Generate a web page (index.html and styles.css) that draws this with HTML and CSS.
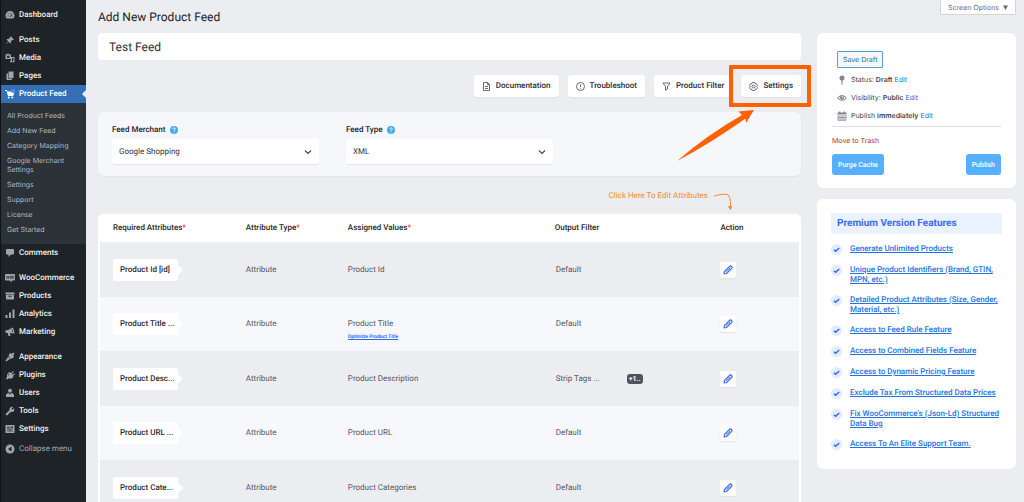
FILE: index.html
```html
<!DOCTYPE html>
<html lang="en">
<head>
	<meta charset="UTF-8">
	<meta name="viewport" content="width=device-width, initial-scale=1">
	<title>Add New Product Feed</title>
	<link rel="stylesheet" href="styles.css">
</head>
<body>
	<!-- shared icons -->
	<svg class="sprite">
		<symbol id="pencil" viewBox="0 0 20 20">
			<path d="M2 18l1-5L13 3q2-2 4 0t0 4L7 17z" fill="none" stroke="currentColor" stroke-width="2.4" stroke-linejoin="round"/>
			<path d="M7 13l5-5M11 5l4 4" fill="none" stroke="currentColor" stroke-width="1.600" stroke-linecap="round"/>
		</symbol>
		<symbol id="tick" viewBox="0 0 22 22">
			<circle cx="11" cy="11" r="11" fill="#e3ecfe"/>
			<path d="M6 11.500l3.200 3L16.500 8" fill="none" stroke="#2f66ee" stroke-width="2.800"/>
		</symbol>
		<symbol id="help" viewBox="0 0 16 16">
			<circle cx="8" cy="8" r="8" fill="#45a9fb"/>
			<path d="M5.500 6.300q.1-2.600 2.600-2.600t2.500 2.200q0 1.300-1.300 2T8 9.800" fill="none" stroke="#fff" stroke-width="1.600"/>
			<circle cx="8" cy="12" r="1.100" fill="#fff"/>
		</symbol>
		<symbol id="chevron" viewBox="0 0 16 16">
			<path d="M2 5l6 6 6-6" fill="none" stroke="currentColor" stroke-width="2.200"/>
		</symbol>
	</svg>

	<div class="shell">
		<nav class="sidebar">
			<ul class="menu">
				<li><a href="#"><svg class="icon" viewBox="0 0 20 20"><path d="M3.500 17A9 9 0 1 1 16.500 17z"/><path d="M5 12h2M6 7l1.500 1.500M10 5v2M15 12h-2M14.500 7L10 14" stroke="#1d2327" stroke-width="1.600"/></svg>Dashboard</a></li>
				<li class="sep"><a href="#"><svg class="icon" viewBox="0 0 20 20"><path d="M11 2l7 7-2 1-1-.5-3 3q.5 3-1.500 4.500L7 13.500 2 18l-.5-.5L6.500 12.500 3 9q2-2 5-1.500l3-3-.5-1z"/></svg>Posts</a></li>
				<li><a href="#"><svg class="icon" viewBox="0 0 20 20"><path d="M1 3h2l1-1.500h4L9 3h3v9H1z"/><circle cx="6.500" cy="7.500" r="2.600" fill="#1d2327"/><path d="M12 8h7v9a2 2 0 1 1-1.800-2v-4.500H14V17a2 2 0 1 1-2-2z"/></svg>Media</a></li>
				<li><a href="#"><svg class="icon" viewBox="0 0 20 20"><path d="M7 1h10v13H7z"/><path d="M3 5h3v10h8v3H3z"/></svg>Pages</a></li>
				<li class="active">
					<a href="#"><svg class="icon" viewBox="0 0 20 20"><path d="M0 2h4l1 3h14l-2.500 9H6L3 4H0z"/><circle cx="7.500" cy="17.200" r="2"/><circle cx="14.500" cy="17.200" r="2"/><circle cx="16" cy="4" r="4" fill="#5686f5"/></svg>Product Feed</a>
					<ul class="submenu">
						<li><a href="#">All Product Feeds</a></li>
						<li><a href="#">Add New Feed</a></li>
						<li><a href="#">Category Mapping</a></li>
						<li><a href="#">Google Merchant Settings</a></li>
						<li><a href="#">Settings</a></li>
						<li><a href="#">Support</a></li>
						<li><a href="#">License</a></li>
						<li><a href="#">Get Started</a></li>
					</ul>
				</li>
				<li><a href="#"><svg class="icon" viewBox="0 0 20 20"><path d="M4 2h12q2 0 2 2v7q0 2-2 2h-4l-5 5v-5H4q-2 0-2-2V4q0-2 2-2z"/></svg>Comments</a></li>
				<li class="sep"><a href="#"><svg class="icon" viewBox="0 0 20 20"><path d="M2 2h16q2 0 2 2v9q0 2-2 2h-5l1 4-5-4H2q-2 0-2-2V4q0-2 2-2z"/><path d="M3 6l1 5 2-4 1 4 1-5M10 6.500h3v4h-3zM14.500 6.500h3v4h-3z" fill="none" stroke="#1d2327" stroke-width="1.200"/></svg>WooCommerce</a></li>
				<li><a href="#"><svg class="icon" viewBox="0 0 20 20"><path d="M1 3h18v4H1zM2 8h16v9H2z"/><path d="M7 10.500h6" stroke="#1d2327" stroke-width="2"/></svg>Products</a></li>
				<li><a href="#"><svg class="icon" viewBox="0 0 20 20"><path d="M1 12h4v6H1zM8 7h4v11H8zM15 1h4v17h-4z"/></svg>Analytics</a></li>
				<li><a href="#"><svg class="icon" viewBox="0 0 20 20"><path d="M1 7l5-1 9-5q4 4 4 12l-9-1 1 6H7l-1.500-6L2 12q-2-2-1-5z"/><path d="M13 5q3 1 3 5" fill="none" stroke="#1d2327" stroke-width="1.600"/></svg>Marketing</a></li>
				<li class="sep"><a href="#"><svg class="icon" viewBox="0 0 20 20"><path d="M9 3l3-1 1 2 4-3 2 2-3 4 2 1-1 3-5 3-5-6zM6 9l5 5-3 1-5 4-2-2 4-5z"/></svg>Appearance</a></li>
				<li><a href="#"><svg class="icon" viewBox="0 0 20 20"><path d="M12 6l4-4 1.500 1.500-4 4 2 2 3-3L20 8l-4 4 1 1-3 4H7l-3 2-2-2 2-3V9l4-5z"/><path d="M5 6l3 2-2 4" stroke="#1d2327" fill="none"/></svg>Plugins</a></li>
				<li><a href="#"><svg class="icon" viewBox="0 0 20 20"><circle cx="10" cy="5.500" r="4"/><path d="M2 18v-4q1-4 5-4l3 3 3-3q4 0 5 4v4z"/></svg>Users</a></li>
				<li><a href="#"><svg class="icon" viewBox="0 0 20 20"><path d="M16.500 2L13 5.500l1.500 2L18 4.500q2 5-2 7-2 1-4 0L5 18q-2 1.500-3 0t0-3l7-6.500Q8 5 10.500 3t6-1z"/></svg>Tools</a></li>
				<li><a href="#"><svg class="icon" viewBox="0 0 20 20"><path d="M1 2h18v16H1z"/><path d="M6 4v12M10 4v12M14 4v12M4 8h4M8 12h4M12 7h4" stroke="#1d2327" stroke-width="1.300"/></svg>Settings</a></li>
				<li><button class="collapse" type="button"><svg class="icon" viewBox="0 0 20 20"><circle cx="10" cy="10" r="9"/><path d="M13 5v10l-7-5z" fill="#1d2327"/></svg>Collapse menu</button></li>
			</ul>
		</nav>

		<main class="content">
			<h1>Add New Product Feed</h1>
			<input class="feed-title" type="text" value="Test Feed" aria-label="Feed title">

			<div class="toolbar">
				<button type="button"><svg class="tool-icon" viewBox="0 0 18 18"><path d="M3 1h8l4 4v12H3zM11 1v4h4M6 9h6M6 13h6" /></svg>Documentation</button>
				<button type="button"><svg class="tool-icon" viewBox="0 0 18 18"><circle cx="9" cy="9" r="8"/><path d="M9 4.500v6M9 12v1.500"/></svg>Troubleshoot</button>
				<button type="button"><svg class="tool-icon" viewBox="0 0 18 18"><path d="M2 2h14l-5 7v5l-4 2.500V9z"/></svg>Product Filter</button>
				<div class="callout">
					<button type="button"><svg class="tool-icon" viewBox="0 0 18 18"><path d="M7 1h4l1.200 2.300 2.600.2 2 3.700L15.500 9l1.300 2-2 3.600-2.600.2L11 17H7l-1.200-2.200-2.600-.2-2-3.600L2.500 9 1.200 7.200l2-3.700 2.600-.2z"/><circle cx="9" cy="9" r="3"/></svg>Settings</button>
					<span class="frame"></span>
					<svg class="pointer" viewBox="0 0 78 52"><path d="M77 1L69 14l-.5-4.500Q34 34 0 52 30 26 65 6l-3.500-3.500z"/></svg>
				</div>
			</div>

			<section class="options">
				<div class="field">
					<div class="field-label"><label for="merchant">Feed Merchant</label><svg class="help"><use href="#help"/></svg></div>
					<div class="select">
						<select id="merchant"><option>Google Shopping</option></select>
						<svg class="chevron"><use href="#chevron"/></svg>
					</div>
				</div>
				<div class="field">
					<div class="field-label"><label for="type">Feed Type</label><svg class="help"><use href="#help"/></svg></div>
					<div class="select">
						<select id="type"><option>XML</option></select>
						<svg class="chevron"><use href="#chevron"/></svg>
					</div>
				</div>
			</section>

			<div class="hint">
				<span>Click Here To Edit Attributes</span>
				<svg class="hint-arrow" viewBox="0 0 18 20"><path d="M0 5Q6 3 12 3.200q5 .3 4.500 12.800" fill="none" stroke="#f08a35"/><path d="M13.500 14.500l3 1 2-1-2 5z" fill="#f08a35"/></svg>
			</div>

			<table class="attributes">
				<thead>
					<tr>
						<th class="c-name">Required Attributes<i>*</i></th>
						<th class="c-type">Attribute Type<i>*</i></th>
						<th class="c-value">Assigned Values<i>*</i></th>
						<th class="c-filter">Output Filter</th>
						<th class="c-action">Action</th>
					</tr>
				</thead>
				<tbody>
					<tr>
						<td><span class="tag">Product Id [id]</span></td>
						<td>Attribute</td>
						<td>Product Id</td>
						<td class="filter">Default</td>
						<td><button class="edit" type="button" aria-label="Edit"><svg><use href="#pencil"/></svg></button></td>
					</tr>
					<tr>
						<td><span class="tag">Product Title ...</span></td>
						<td>Attribute</td>
						<td><div class="value">Product Title<a class="optimize" href="#">Optimize Product Title</a></div></td>
						<td class="filter">Default</td>
						<td><button class="edit" type="button" aria-label="Edit"><svg><use href="#pencil"/></svg></button></td>
					</tr>
					<tr>
						<td><span class="tag">Product Desc...</span></td>
						<td>Attribute</td>
						<td>Product Description</td>
						<td class="filter"><span class="filter-name">Strip Tags ...</span><span class="more">+1..</span></td>
						<td><button class="edit" type="button" aria-label="Edit"><svg><use href="#pencil"/></svg></button></td>
					</tr>
					<tr>
						<td><span class="tag">Product URL ...</span></td>
						<td>Attribute</td>
						<td>Product URL</td>
						<td class="filter">Default</td>
						<td><button class="edit" type="button" aria-label="Edit"><svg><use href="#pencil"/></svg></button></td>
					</tr>
					<tr>
						<td><span class="tag">Product Cate...</span></td>
						<td>Attribute</td>
						<td>Product Categories</td>
						<td class="filter">Default</td>
						<td><button class="edit" type="button" aria-label="Edit"><svg><use href="#pencil"/></svg></button></td>
					</tr>
				</tbody>
			</table>
		</main>

		<aside class="side">
			<button class="screen-options" type="button">Screen Options <svg viewBox="0 0 10 10"><path d="M0 1h10L5 10z"/></svg></button>

			<section class="card publish">
				<button class="save" type="button">Save Draft</button>
				<ul class="meta">
					<li><svg viewBox="0 0 20 20"><circle cx="10" cy="6" r="5"/><path d="M8.800 10h2.400v9H8.800z"/></svg><span>Status: <b>Draft</b> <a href="#">Edit</a></span></li>
					<li><svg viewBox="0 0 20 20"><path d="M0 10q10-12 20 0-10 12-20 0zm2.500 0q7.500 8 15 0-7.500-8-15 0z"/><circle cx="10" cy="9.500" r="4.200"/><circle cx="11" cy="8" r="1.300" fill="#fff"/></svg><span>Visibility: <b>Public</b> <a href="#">Edit</a></span></li>
					<li><svg viewBox="0 0 20 20"><path d="M1 3h18v4H1zM4 1h3v3H4zM13 1h3v3h-3z"/><path d="M2 8v10.500h16V8M6 8v10M10 8v10M14 8v10M2 13h16" fill="none" stroke="#82878c" stroke-width="1.600"/></svg><span>Publish <b>immediately</b> <a href="#">Edit</a></span></li>
				</ul>
				<a class="trash" href="#">Move to Trash</a>
				<div class="actions">
					<button type="button">Purge Cache</button>
					<button type="button">Publish</button>
				</div>
			</section>

			<section class="card premium">
				<h2>Premium Version Features</h2>
				<ul>
					<li><svg><use href="#tick"/></svg><a href="#">Generate Unlimited Products</a></li>
					<li><svg><use href="#tick"/></svg><a href="#">Unique Product Identifiers (Brand, GTIN, MPN, etc.)</a></li>
					<li><svg><use href="#tick"/></svg><a href="#">Detailed Product Attributes (Size, Gender, Material, etc.)</a></li>
					<li><svg><use href="#tick"/></svg><a href="#">Access to Feed Rule Feature</a></li>
					<li><svg><use href="#tick"/></svg><a href="#">Access to Combined Fields Feature</a></li>
					<li><svg><use href="#tick"/></svg><a href="#">Access to Dynamic Pricing Feature</a></li>
					<li><svg><use href="#tick"/></svg><a href="#">Exclude Tax From Structured Data Prices</a></li>
					<li><svg><use href="#tick"/></svg><a href="#">Fix WooCommerce's (Json-Ld) Structured Data Bug</a></li>
					<li><svg><use href="#tick"/></svg><a href="#">Access To An Elite Support Team.</a></li>
				</ul>
			</section>
		</aside>
	</div>
</body>
</html>
```
FILE: styles.css
```css
*{box-sizing: border-box;}
body{margin: 0;background: #ecedf0;color: #3c434a;font: 8px/10px Roboto, sans-serif;
	text-rendering: geometricPrecision;}
ul{list-style: none;margin: 0;padding: 0;}
h1,h2{margin: 0;}
button,input,select{font: inherit;color: inherit;border: 0;margin: 0;text-rendering: inherit;}
svg{display: block;flex: none;}
.sprite{display: none;}
.shell{display: flex;height: 100vh;overflow: hidden;}

/* sidebar */
.sidebar{width: 86px;flex: none;background: #1d2327;border-left: 1px solid #0f1215;
	padding-top: 6px;}
.menu a,.collapse{display: flex;align-items: center;gap: 4px;height: 18px;padding: 0 0 0 4px;
	color: #f0f0f1;font-weight: 500;text-decoration: none;white-space: nowrap;}
.menu .sep{margin-top: 7px;}
.icon{width: 10px;height: 10px;fill: #a0a5aa;}
.menu .active > a{background: #3370b5;color: #fff;position: relative;}
.menu .active > a::after{content: "";position: absolute;right: 0;top: 5px;
	border: 4px solid transparent;border-left: 0;border-right-color: #ecedf0;}
.active .icon{fill: #fff;}
.submenu{background: #2c3338;padding: 5px 0 7px;}
.menu .submenu a{display: block;height: auto;padding: 3px 16px 3px 6px;font: 400 7px/9px Inter, sans-serif;
	color: #b4b9be;white-space: normal;}
.collapse{height: 22px;background: none;color: #a7aaad;font-weight: 400;}

/* main column */
.content{flex: 1;min-width: 0;padding: 0 16px 0 12px;}
h1{padding: 7px 0 6px;font-size: 12px;line-height: 20px;font-weight: 400;color: #1d2327;}
.feed-title{display: block;width: 100%;height: 27px;padding: 0 11px;border-radius: 4px;background: #fff;
	font-size: 12px;color: #2c3338;}
.toolbar{display: flex;justify-content: flex-end;gap: 9px;margin-top: 15px;}
.toolbar button{display: flex;align-items: center;gap: 5px;height: 22px;padding: 0 8px;border-radius: 3px;
	background: #fff;box-shadow: 0 1px 1px #dfe1e8;font-weight: 500;color: #2b2b33;}
.tool-icon{width: 9px;height: 9px;fill: none;stroke: #3c3c44;stroke-width: 1.5;}
.callout{position: relative;}
.frame{position: absolute;inset: -10px -10px -10px -12px;border: 4px solid #ff6000;border-radius: 1px;}
.pointer{position: absolute;right: 46px;top: 34px;width: 78px;height: 52px;fill: #ff6000;}

.options{display: flex;gap: 27px;margin-top: 15px;padding: 13px 14px 12px;border-radius: 6px;
	background: #f6f7fa;box-shadow: 0 1px 1px #e0e2ea;}
.field{flex: 0 1 207px;}
.field-label{display: flex;align-items: center;gap: 5px;margin-bottom: 4px;font-weight: 500;color: #23232b;}
.help{width: 8px;height: 8px;}
.select{position: relative;}
.select select{display: block;appearance: none;width: 100%;height: 25px;padding: 0 7px;border-radius: 3px;
	background: #fff;box-shadow: 0 1px 1px #e3e5ec;color: #33333b;}
.chevron{position: absolute;right: 7px;top: 9px;width: 8px;height: 8px;color: #444;pointer-events: none;}

.hint{display: flex;justify-content: flex-end;gap: 6px;padding: 15px 69px 3px 0;color: #f08a35;}
.hint-arrow{width: 18px;height: 20px;}

/* attributes table */
.attributes{width: 100%;table-layout: fixed;border-collapse: separate;border-spacing: 0;
	border: solid #fff;border-width: 0 2px;border-radius: 5px 5px 0 0;background: #fff;}
.attributes th{height: 28px;padding: 0 0 0 13px;text-align: left;font-weight: 500;color: #1f1f27;}
.attributes th i{font-style: normal;color: #f33;}
.attributes td{height: 54px;padding: 0 0 0 13px;background: #f7f8fb;color: #55585e;}
.attributes tr:nth-child(odd) td{height: 55px;background: #ecedf0;}
.c-name{width: 19%;}
.c-type{width: 14.6%;}
.c-value{width: 29.6%;}
.c-filter{width: 23.7%;}
.tag{display: flex;align-items: center;position: relative;width: 65px;height: 22px;padding-left: 7px;
	border-radius: 2px;background: #fff;font-weight: 500;color: #2b2b33;white-space: nowrap;}
.tag::after{content: "";position: absolute;left: 100%;top: 6px;
	border: 5px solid transparent;border-right: 0;border-left-color: #fff;}
.value{position: relative;}
.optimize{position: absolute;left: 0;top: 13px;font-size: 5px;font-weight: 700;color: #2f6bf0;}
.attributes .filter{padding-left: 14px;}
.filter-name{display: inline-block;width: 71px;}
.more{display: inline-block;padding: 0 2px;border-radius: 3px;background: #50545a;color: #fff;
	font-size: 7px;font-weight: 700;}
.edit{display: grid;place-items: center;width: 16px;height: 16px;padding: 0;border-radius: 2px;
	background: #fff;box-shadow: 0 1px 1px #dfe2ea;color: #3b6ff0;}
.edit svg{width: 10px;height: 10px;}

/* right column */
.side{width: 199px;flex: none;margin-right: 8px;display: flex;flex-direction: column;}
.side a{color: #2173e6;}
.screen-options{display: flex;align-items: center;gap: 4px;align-self: flex-end;height: 15px;
	margin-bottom: 18px;padding: 0 7px;border: 1px solid #d3d5da;border-top: 0;
	border-radius: 0 0 2px 2px;background: #fff;font: 7px/9px Inter, sans-serif;color: #646970;}
.screen-options svg{width: 5px;height: 5px;fill: #646970;}
.card{border-radius: 6px;background: #fff;padding: 14px;}
.publish{padding: 18px 15px 13px;font-family: Inter, sans-serif;font-size: 7px;}
.save{display: block;height: 17px;margin-left: 5px;padding: 0 5px;border: 1px solid #5b9bd0;border-radius: 1px;
	background: #f6f7f7;color: #2271b1;}
.meta{padding: 7px 0 5px 5px;border-bottom: 1px solid #dfe0e3;display: grid;gap: 8px;}
.meta li{display: flex;align-items: center;gap: 4px;}
.meta svg{width: 10px;height: 10px;fill: #82878c;}
.meta b{font-weight: 600;}
.meta a,.side .trash{text-decoration: none;}
.side .trash{display: block;margin: 9px 0 8px;color: #b32d2e;}
.actions{display: flex;justify-content: space-between;}
.actions button{height: 21px;padding: 0 6px;border-radius: 3px;background: #56b0ff;color: #fff;
	font-family: Roboto, sans-serif;font-weight: 500;}
.premium{margin-top: 11px;padding-bottom: 19px;}
.premium h2{padding: 0 6px;border-radius: 2px;background: #eaf1ff;color: #3c6cf0;font-size: 10px;line-height: 21px;}
.premium ul{display: grid;gap: 10px;padding-top: 10px;}
.premium li{display: flex;gap: 8px;}
.premium li svg{width: 11px;height: 11px;}
.premium a{font-weight: 500;}
```
